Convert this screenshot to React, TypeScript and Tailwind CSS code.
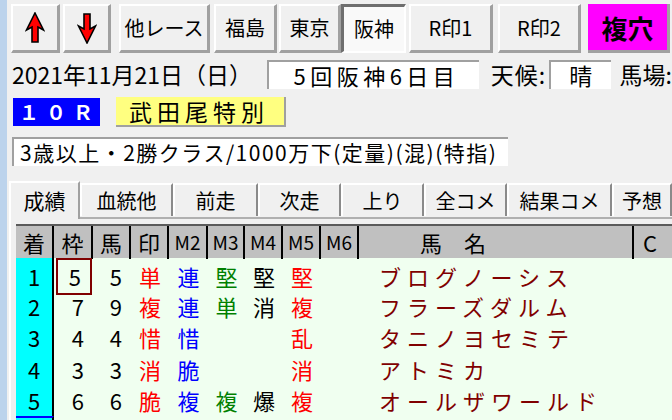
const jp = "font-['Noto_Sans_CJK_JP',sans-serif]"

function UpArrow({ down = false }: { down?: boolean }) {
  return (
    <svg width="20" height="32" viewBox="0 0 20 32" className={down ? 'rotate-180' : ''}>
      <polygon
        points="10,1 18.5,18 13,15 13,30 7,30 7,15 1.5,18"
        fill="#ff0000"
        stroke="#000"
        strokeWidth="1.6"
        strokeLinejoin="miter"
      />
    </svg>
  )
}

const buttons = [
  { label: '他レース', w: 'w-[91px]', ml: 'ml-[8px]' },
  { label: '福島', w: 'w-[63px]', ml: 'ml-[4px]' },
  { label: '東京', w: 'w-[62px]', ml: 'ml-[2px]' },
]

function RaisedButton({
  children,
  className = '',
}: {
  children: React.ReactNode
  className?: string
}) {
  return (
    <div
      className={`h-[49px] flex items-center justify-center bg-[#f0f0f0] border-t-2 border-l-2 border-t-white border-l-white border-r-[3px] border-b-[3px] border-r-[#a0a0a0] border-b-[#a0a0a0] ${className}`}
    >
      {children}
    </div>
  )
}

const columns = ['着', '枠', '馬', '印', 'M2', 'M3', 'M4', 'M5', 'M6', '馬　名', 'C']

const rows = [
  { no: '1', waku: '5', uma: '5', m: ['単', '連', '堅', '堅', '堅', ''], name: 'ブログノーシス' },
  { no: '2', waku: '7', uma: '9', m: ['複', '連', '単', '消', '複', ''], name: 'フラーズダルム' },
  { no: '3', waku: '4', uma: '4', m: ['惜', '惜', '', '', '乱', ''], name: 'タニノヨセミテ' },
  { no: '4', waku: '3', uma: '3', m: ['消', '脆', '', '', '消', ''], name: 'アトミカ' },
  { no: '5', waku: '6', uma: '6', m: ['脆', '複', '複', '爆', '複', ''], name: 'オールザワールド' },
]

const markColors = ['text-[#ff0000]', 'text-[#0000ff]', 'text-[#008000]', 'text-black', 'text-[#ff0000]', 'text-black']

const tabs = [
  { label: '血統他', w: 'w-[93px]' },
  { label: '前走', w: 'w-[85px]' },
  { label: '次走', w: 'w-[83px]' },
  { label: '上り', w: 'w-[83px]' },
  { label: '全コメ', w: 'w-[83px]' },
  { label: '結果コメ', w: 'w-[105px]' },
  { label: '予想', w: 'w-[60px]' },
]

const grid =
  'grid grid-cols-[38px_39px_38px_38px_39px_37px_38px_38px_38px_275px_60px]'

export default function App() {
  return (
    <div className={`w-[672px] h-[420px] overflow-hidden bg-[#f0f0f0] flex ${jp}`}>
      <div className="w-[7px] shrink-0 bg-[#bcd3ec]" />

      <div className="flex-1 flex flex-col min-w-0">
        {/* Top buttons */}
        <div className="flex items-start pt-[4px] pl-[4px] h-[56px] shrink-0">
          <RaisedButton className="w-[49px]">
            <UpArrow />
          </RaisedButton>
          <RaisedButton className="w-[48px] ml-[3px]">
            <UpArrow down />
          </RaisedButton>
          {buttons.map((b) => (
            <RaisedButton key={b.label} className={`${b.w} ${b.ml} text-[20px] text-black`}>
              {b.label}
            </RaisedButton>
          ))}
          <div className="w-[65px] h-[49px] flex items-center justify-center bg-[#f9f9f9] border-t-[3px] border-l-[3px] border-t-[#6e6e6e] border-l-[#6e6e6e] border-r-2 border-b-2 border-r-white border-b-white text-[20px] text-black">
            阪神
          </div>
          <RaisedButton className="w-[84px] ml-[3px] text-[20px] text-black">R印1</RaisedButton>
          <RaisedButton className="w-[83px] ml-[5px] text-[20px] text-black">R印2</RaisedButton>
          <div className="w-[82px] h-[49px] ml-[7px] flex items-center justify-center bg-[#ff00ff] border-r-[3px] border-b-[3px] border-r-[#a0a0a0] border-b-[#a0a0a0] text-[26px] font-bold text-black">
            複穴
          </div>
        </div>

        {/* Date row */}
        <div className="flex items-center h-[37px] shrink-0 pl-[5px] text-[23px] text-black whitespace-nowrap">
          <span className="w-[265px]">2021年11月21日（日）</span>
          <div className="w-[222px] h-[29px] ml-[5px] bg-white border-t-2 border-l-2 border-[#a0a0a0] flex items-center pl-[24px] text-[22px] tracking-[4.5px]">
            5回阪神6日目
          </div>
          <span className="ml-[12px] tracking-[1px]">天候:</span>
          <div className="w-[65px] h-[29px] ml-[3px] bg-white border-t-2 border-l-2 border-[#a0a0a0] flex items-center justify-center">
            晴
          </div>
          <span className="ml-[9px]">馬場:</span>
        </div>

        {/* Race name row */}
        <div className="flex items-center h-[38px] shrink-0 pl-[6px]">
          <div className="w-[87px] h-[28px] bg-[#0000ff] text-white font-bold text-[20px] flex items-center justify-start pl-[6px] tracking-[7px] whitespace-nowrap overflow-hidden">
            １０Ｒ
          </div>
          <div className="w-[170px] h-[30px] ml-[16px] bg-[#ffff80] border-r-2 border-b-2 border-[#a0a0a0] text-black text-[23px] flex items-center pl-[13px] tracking-[5px] whitespace-nowrap">
            武田尾特別
          </div>
        </div>

        {/* Class row */}
        <div className="flex items-center pl-[5px] h-[41px] shrink-0">
          <div className="w-[496px] h-[29px] bg-white border-t-2 border-l-2 border-[#a0a0a0] flex items-center pl-[6px] text-[21px] tracking-[1.5px] text-black whitespace-nowrap">
            3歳以上・2勝クラス/1000万下(定量)(混)(特指)
          </div>
        </div>

        {/* Tabs */}
        <div className="flex items-end h-[45px] shrink-0 pl-[2px] relative z-10">
          <div className="w-[88px] h-[38px] bg-[#f0f0f0] border-t-2 border-l-2 border-white border-r-2 border-r-[#a0a0a0] flex items-center justify-center text-[21px] text-black -mb-[2px]">
            成績
          </div>
          {tabs.map((t) => (
            <div
              key={t.label}
              className={`${t.w} shrink-0 h-[33px] mb-[1px] bg-[#f0f0f0] border-t-2 border-l-2 border-white border-r-2 border-r-[#8a8a8a] flex items-center justify-center text-[20px] text-black whitespace-nowrap`}
            >
              {t.label}
            </div>
          ))}
        </div>

        {/* Panel */}
        <div className="flex-1 border-t-2 border-t-[#b0b0b0] border-l-2 border-l-white ml-[2px] pl-[5px] pt-[5px]">
          <div className="border-t-2 border-[#5a5a5a]">
            <div className={`${grid} h-[32px] bg-[#c0c0c0] text-[22px] text-black`}>
              {columns.map((c, i) => (
                <div
                  key={c}
                  className={`flex items-center ${
                    i === 9 ? 'justify-start pl-[61px]' : i === 10 ? 'justify-start pl-[9px]' : 'justify-center'
                  } border-r-2 border-black ${c.startsWith('M') ? 'text-[19px]' : ''} whitespace-pre`}
                >
                  {c}
                </div>
              ))}
            </div>
            {rows.map((r, ri) => (
              <div key={r.no} className={`${grid} h-[31.5px] bg-[#f0fff0] text-[22px]`}>
                <div className="bg-[#00ffff] border-r-2 border-black flex items-center justify-center text-black">
                  {r.no}
                </div>
                <div
                  className={`flex items-center justify-end pr-[9px] text-black ${
                    ri === 0 ? 'border-2 border-[#800000] ml-[2px] mr-[1px] pr-[7px]' : ''
                  }`}
                >
                  {r.waku}
                </div>
                <div className="flex items-center justify-end pr-[9px] text-black">{r.uma}</div>
                {r.m.map((m, mi) => (
                  <div key={mi} className={`flex items-center justify-center ${markColors[mi]}`}>
                    {m}
                  </div>
                ))}
                <div className="flex items-center pl-[20px] text-[#800000] tracking-[6px] whitespace-nowrap">
                  {r.name}
                </div>
                <div />
              </div>
            ))}
            <div className={`${grid} h-[31.5px] bg-[#f0fff0]`}>
              <div className="bg-[#00ffff] border-r-2 border-black border-t-2 border-t-[#0000ff]" />
            </div>
          </div>
        </div>
      </div>
    </div>
  )
}
